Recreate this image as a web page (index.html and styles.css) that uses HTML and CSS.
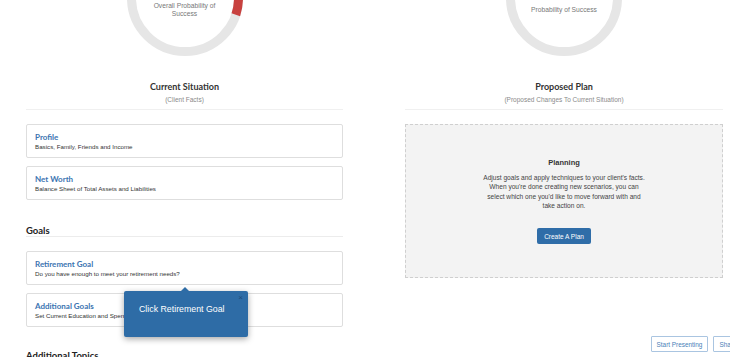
FILE: index.html
```html
<!DOCTYPE html>
<html lang="en">
<head>
  <meta charset="UTF-8" />
  <meta name="viewport" content="width=device-width, initial-scale=1.0" />
  <title>Client Overview</title>
  <link rel="stylesheet" href="styles.css">
</head>
<body>
<div class="page">

  <!-- Current Situation -->
  <div class="col">
    <div class="gauge">
      <svg class="gauge-ring" width="120" height="120" viewBox="0 0 120 120">
        <circle cx="60" cy="60" r="53.5" fill="none" stroke="#e6e6e6" stroke-width="9" />
        <circle cx="60" cy="60" r="53.5" fill="none" stroke="#c8413f" stroke-width="9"
                stroke-dasharray="101 400" transform="rotate(-90 60 60)" />
      </svg>
      <div class="gauge-label">Overall Probability of<br>Success</div>
    </div>

    <div class="col-head">
      <h2>Current Situation</h2>
      <div class="sub">(Client Facts)</div>
    </div>

    <div class="card">
      <div class="card-title">Profile</div>
      <div class="card-text">Basics, Family, Friends and Income</div>
    </div>
    <div class="card">
      <div class="card-title">Net Worth</div>
      <div class="card-text">Balance Sheet of Total Assets and Liabilities</div>
    </div>

    <h3 class="section">Goals</h3>

    <div class="card card-tip">
      <div class="card-title">Retirement Goal</div>
      <div class="card-text">Do you have enough to meet your retirement needs?</div>
      <div class="tip">
        <span class="tip-close">&times;</span>
        Click Retirement Goal
      </div>
    </div>
    <div class="card">
      <div class="card-title">Additional Goals</div>
      <div class="card-text">Set Current Education and Spending Goals</div>
    </div>

    <h3 class="section section-more">Additional Topics</h3>
  </div>

  <!-- Proposed Plan -->
  <div class="col">
    <div class="gauge">
      <svg class="gauge-ring" width="120" height="120" viewBox="0 0 120 120">
        <circle cx="60" cy="60" r="53.5" fill="none" stroke="#e6e6e6" stroke-width="9" />
      </svg>
      <div class="gauge-label">Probability of Success</div>
    </div>

    <div class="col-head">
      <h2>Proposed Plan</h2>
      <div class="sub">(Proposed Changes To Current Situation)</div>
    </div>

    <div class="planning">
      <h4>Planning</h4>
      <p>Adjust goals and apply techniques to your client's facts.<br>
        When you're done creating new scenarios, you can<br>
        select which one you'd like to move forward with and<br>
        take action on.</p>
      <button class="btn-primary">Create A Plan</button>
    </div>

    <div class="actions">
      <button class="btn-outline">Start Presenting</button>
      <button class="btn-outline">Share Plan</button>
    </div>
  </div>

</div>
</body>
</html>
```

FILE: styles.css
```css
html, body {
  margin: 0;
  padding: 0;
  overflow: hidden;
  background: #fff;
}

body {
  font-family: 'Liberation Sans', Arial, sans-serif;
  color: #333;
}

.page {
  display: grid;
  grid-template-columns: 317px 318px;
  column-gap: 62px;
  padding-left: 26px;
}

.col {
  display: flex;
  flex-direction: column;
  min-width: 0;
}

/* gauge */
.gauge {
  position: relative;
  height: 57px;
  overflow: hidden;
}

.gauge-ring {
  position: absolute;
  top: -62px;
  left: 50%;
  margin-left: -60px;
}

.gauge-label {
  position: absolute;
  top: 0;
  left: 0;
  right: 0;
  height: 20px;
  display: flex;
  align-items: center;
  justify-content: center;
  text-align: center;
  font-size: 6.7px;
  line-height: 8px;
  color: #777;
}

/* column header */
.col-head {
  text-align: center;
  padding-top: 24px;
  padding-bottom: 5px;
  border-bottom: 1px solid #f0f0f0;
  margin-bottom: 14px;
}

.col-head h2 {
  margin: 0;
  font-family: Lato, 'Liberation Sans', sans-serif;
  font-weight: bold;
  font-size: 9px;
  line-height: 12px;
  color: #333;
}

.col-head .sub {
  margin-top: 2px;
  font-size: 6.5px;
  line-height: 9px;
  color: #8a8a8a;
}

/* cards */
.card {
  border: 1px solid #dedede;
  border-radius: 2px;
  height: 34px;
  box-sizing: border-box;
  padding: 7px 8px 0;
  margin-bottom: 8px;
  background: #fff;
}

.card-title {
  font-family: Lato, 'Liberation Sans', sans-serif;
  font-weight: bold;
  font-size: 8px;
  line-height: 10px;
  color: #3b74b1;
}

.card-text {
  font-size: 6.2px;
  line-height: 9px;
  color: #333;
}

.section {
  margin: 17px 0 14px;
  padding-bottom: 0;
  border-bottom: 1px solid #ececec;
  font-family: Lato, 'Liberation Sans', sans-serif;
  font-weight: bold;
  font-size: 9.5px;
  line-height: 11px;
  color: #222;
}

.section-more {
  margin-top: 15px;
}

/* tooltip */
.card-tip {
  position: relative;
}

.tip {
  position: absolute;
  left: 97px;
  top: 39px;
  width: 124px;
  height: 46px;
  box-sizing: border-box;
  padding: 13px 0 0 15px;
  background: #2e6ca6;
  border-radius: 2px;
  box-shadow: 0 2px 6px rgba(0, 0, 0, 0.35);
  font-size: 8.8px;
  line-height: 11px;
  color: #fff;
  z-index: 2;
}

.tip::before {
  content: "";
  position: absolute;
  top: -4px;
  left: 57px;
  border-left: 4px solid transparent;
  border-right: 4px solid transparent;
  border-bottom: 4px solid #2e6ca6;
}

.tip-close {
  position: absolute;
  top: 2px;
  right: 5px;
  font-size: 8px;
  line-height: 10px;
  color: #1d4a78;
}

/* planning box */
.planning {
  height: 154px;
  box-sizing: border-box;
  border: 1px dashed #cfcfcf;
  background: #f3f3f3;
  display: flex;
  flex-direction: column;
  align-items: center;
  padding-top: 33px;
  text-align: center;
}

.planning h4 {
  margin: 0;
  font-size: 7.5px;
  line-height: 10px;
  font-weight: bold;
  color: #333;
}

.planning p {
  margin: 5px 0 0;
  font-size: 6.6px;
  line-height: 9.3px;
  color: #444;
}

.btn-primary {
  margin-top: 18px;
  height: 16px;
  padding: 0 7px;
  border: none;
  border-radius: 2px;
  background: #2f6da8;
  color: #fff;
  font-family: 'Liberation Sans', Arial, sans-serif;
  font-size: 6.5px;
  cursor: pointer;
}

.actions {
  display: flex;
  justify-content: flex-end;
  gap: 5px;
  margin-top: 58px;
  margin-right: -34px;
}

.btn-outline {
  height: 16px;
  padding: 0 5px;
  border: 1px solid #aac5e1;
  border-radius: 1px;
  background: #fff;
  color: #4a7fb8;
  font-family: 'Liberation Sans', Arial, sans-serif;
  font-size: 6.4px;
  cursor: pointer;
}
```
